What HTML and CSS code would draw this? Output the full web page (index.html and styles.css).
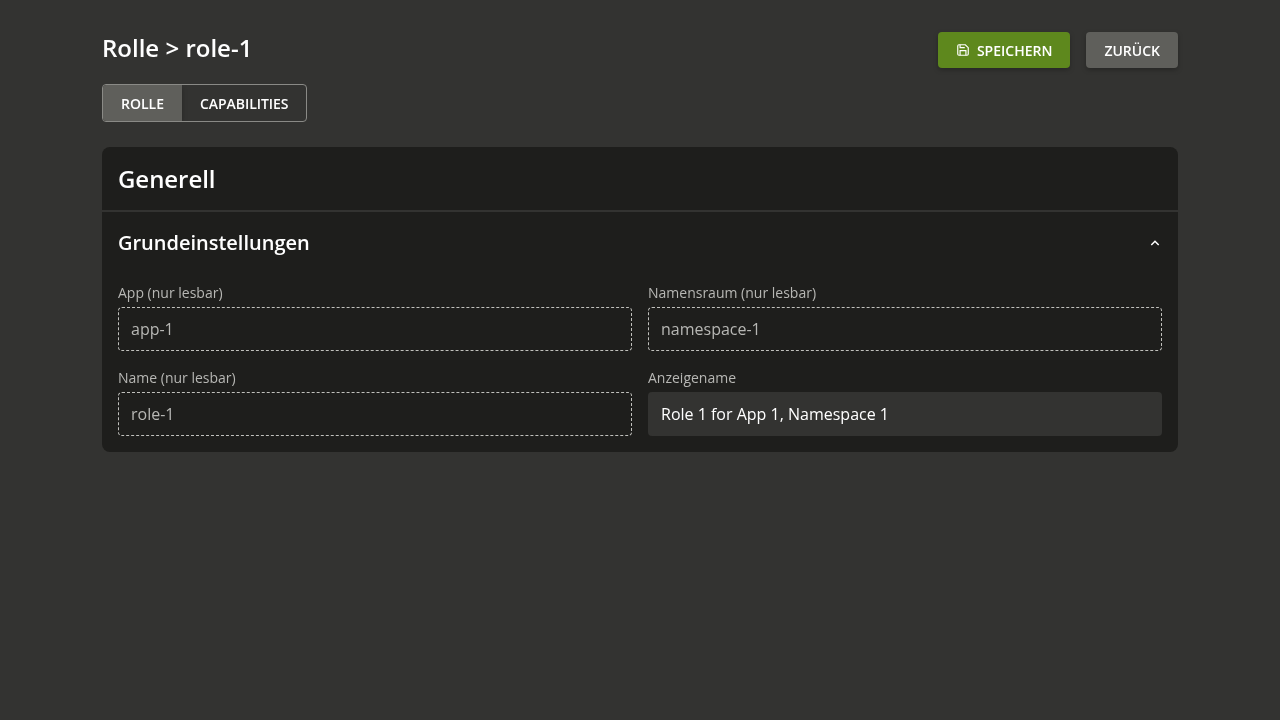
FILE: index.html
```html
<!DOCTYPE html>
<html lang="de">
<head>
<meta charset="utf-8">
<title>Rolle</title>
<link rel="stylesheet" href="styles.css">
</head>
<body>
<main class="page">
  <header class="header">
    <h1 class="title">Rolle &gt; role-1</h1>
    <div class="actions">
      <button class="btn btn-primary"><svg class="icon-save" viewBox="0 0 24 24"><path d="M5 21h14a2 2 0 0 0 2-2V8l-5-5H5a2 2 0 0 0-2 2v14a2 2 0 0 0 2 2z"/><path d="M7 3v5h8M7 21v-8h10v8"/></svg>SPEICHERN</button>
      <button class="btn btn-secondary">ZURÜCK</button>
    </div>
  </header>
  <nav class="tabs">
    <button class="tab tab-active">ROLLE</button>
    <button class="tab tab-wide">CAPABILITIES</button>
  </nav>
  <section class="card">
    <h2 class="card-title">Generell</h2>
    <div class="section-head">
      <h3 class="section-title">Grundeinstellungen</h3>
      <svg class="chevron" viewBox="0 0 14 14"><path d="M3.3 9 7 5.3 10.7 9"/></svg>
    </div>
    <div class="fields">
      <label class="field"><span class="label">App (nur lesbar)</span><input class="input readonly" value="app-1" readonly></label>
      <label class="field"><span class="label">Namensraum (nur lesbar)</span><input class="input readonly" value="namespace-1" readonly></label>
      <label class="field"><span class="label">Name (nur lesbar)</span><input class="input readonly" value="role-1" readonly></label>
      <label class="field"><span class="label">Anzeigename</span><input class="input" value="Role 1 for App 1, Namespace 1"></label>
    </div>
  </section>
</main>
</body>
</html>
```
FILE: styles.css
```css
* { box-sizing: border-box; }
body { margin: 0; min-height: 100vh; background: #333331; color: #fff; font-family: "Open Sans", sans-serif; }
.page { width: 1076px; margin: 0 auto; padding-top: 32px; will-change: transform; }
.header { display: flex; justify-content: space-between; height: 52px; }
.title { margin: 0; font-size: 24px; line-height: 32px; font-weight: 600; }
.actions { display: flex; gap: 16px; }
.btn { display: flex; align-items: center; height: 36px; padding: 2px 18px 0; border: 0; border-radius: 4px; color: #fff; font: 600 14px/20px "Open Sans", sans-serif; box-shadow: 0 2px 5px rgba(0,0,0,.25); }
.btn-primary { background: #5e881d; }
.btn-secondary { background: #5f5f5b; }
.icon-save { width: 14px; height: 14px; margin: -3px 7px 0 0; fill: none; stroke: #fff; stroke-width: 2; }
.tabs { display: flex; width: fit-content; height: 38px; border: 1px solid #8a8a86; border-radius: 4px; overflow: hidden; }
.tab { padding: 2px 18px 0; border: 0; background: none; color: #fff; font: 600 14px/20px "Open Sans", sans-serif; }
.tab-wide { letter-spacing: -0.06px; }
.tab-active { background: #5f5f5b; box-shadow: 0 2px 5px rgba(0,0,0,.25); }
.card { margin-top: 25px; border-radius: 8px; background: #1e1e1c; }
.card-title { margin: 0; height: 65px; padding: 16px; border-bottom: 2px solid #333331; font-size: 24px; line-height: 32px; font-weight: 600; letter-spacing: -0.05px; }
.section-head { display: flex; justify-content: space-between; align-items: center; height: 62px; padding: 0 16px; }
.section-title { margin: 0; font-size: 20px; line-height: 28px; font-weight: 600; letter-spacing: -0.01px; }
.chevron { width: 14px; height: 14px; fill: none; stroke: #fff; stroke-width: 1.5; }
.fields { display: grid; grid-template-columns: 1fr 1fr; gap: 16px; padding: 8px 16px 16px; }
.field { display: flex; flex-direction: column; gap: 4px; }
.label { color: #b7b7b4; font-size: 14px; line-height: 21px; }
.input { width: 100%; height: 44px; padding: 0 12px; border: 1px solid transparent; border-radius: 4px; outline: 0; background: #333331; color: #fff; font: 400 16px/24px "Open Sans", sans-serif; }
.readonly { background: transparent; border: 1px dashed #c0c0bc; color: #b7b7b4; }
```
